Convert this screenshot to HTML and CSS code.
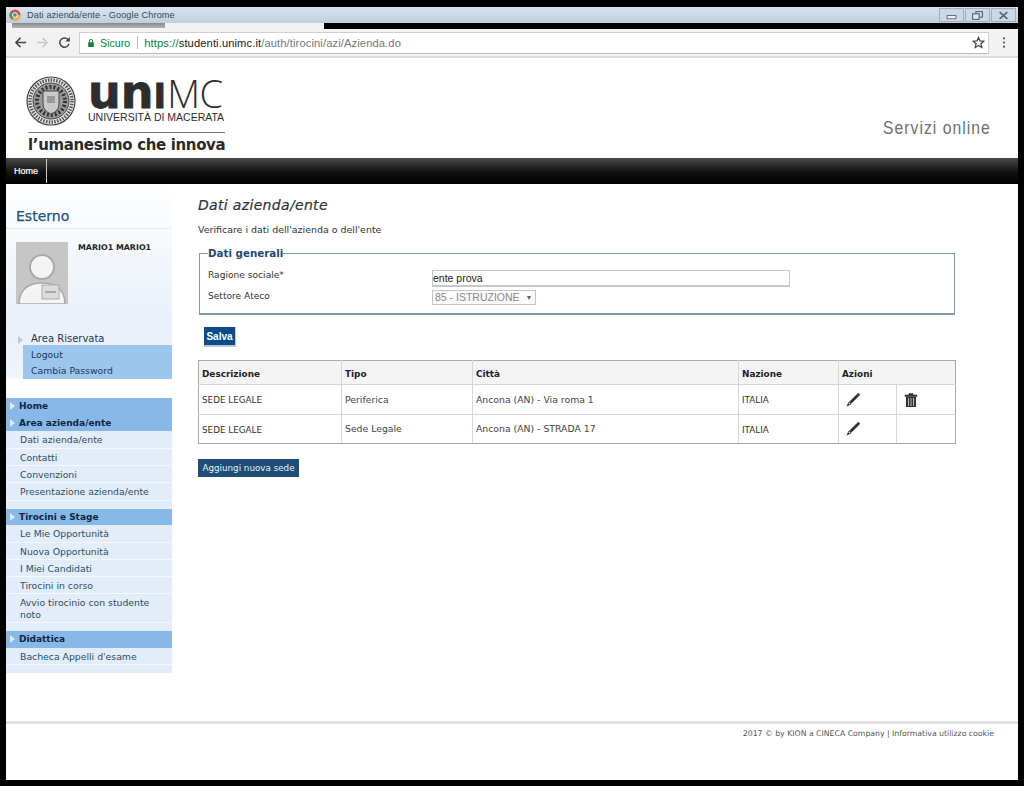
FILE: index.html
```html
<!DOCTYPE html>
<html lang="it">
<head>
<meta charset="utf-8">
<title>Dati azienda/ente</title>
<link rel="stylesheet" href="styles.css">
</head>
<body>
<div class="window">
  <div class="titlebar">
    <svg class="favicon" viewBox="0 0 12 12"><circle cx="6" cy="6" r="5.5" fill="#d9503f"/><path d="M6 6 L11.5 6 A5.5 5.5 0 0 1 3 10.6Z" fill="#e8b93a"/><path d="M6 6 L3 10.6 A5.5 5.5 0 0 1 1 3.6Z" fill="#4f9a55"/><circle cx="6" cy="6" r="2.4" fill="#4a86c8" stroke="#fff"/></svg>
    <span class="wintitle">Dati azienda/ente - Google Chrome</span>
    <div class="winbtns">
      <span class="winbtn"><svg viewBox="0 0 10 8"><rect x="1" y="4" width="8" height="3" fill="#eef2f6" stroke="#5a6470" stroke-width=".8"/></svg></span>
      <span class="winbtn"><svg viewBox="0 0 10 8"><rect x="3.5" y="0.5" width="6" height="5" fill="none" stroke="#5a6470"/><rect x="0.5" y="2.5" width="6" height="5" fill="#dfe6ee" stroke="#5a6470"/></svg></span>
      <span class="winbtn"><svg viewBox="0 0 10 8"><path d="M1.5 1 L8.5 7 M8.5 1 L1.5 7" stroke="#5a6470" stroke-width="1.5"/></svg></span>
    </div>
  </div>
  <div class="tabstrip"><div class="tab"><div class="tabbar"></div></div><div class="tabrest"></div></div>
  <div class="toolbar">
    <svg class="tool" viewBox="0 0 14 14"><path d="M13 7H2M7 2 2 7l5 5" fill="none" stroke="#444" stroke-width="1.6"/></svg>
    <svg class="tool" viewBox="0 0 14 14"><path d="M1 7h11M7 2l5 5-5 5" fill="none" stroke="#c8c8c8" stroke-width="1.6"/></svg>
    <svg class="tool" viewBox="0 0 14 14"><path d="M11.8 8.5A5 5 0 1 1 10.5 3.5L12 5" fill="none" stroke="#444" stroke-width="1.6"/><path d="M12.8 1.2V6H8Z" fill="#444"/></svg>
    <div class="omnibox">
      <svg class="lock" viewBox="0 0 10 12"><path d="M3 5V3.5a2 2 0 0 1 4 0V5" fill="none" stroke="#0b8043" stroke-width="1.2"/><rect x="1.5" y="5" width="7" height="6" fill="#0b8043"/></svg>
      <span class="secure">Sicuro</span>
      <span class="urlsep"></span>
      <span class="url"><span class="scheme">https://</span><span class="host">studenti.unimc.it</span>/auth/tirocini/azi/Azienda.do</span>
      <svg class="star" viewBox="0 0 14 14"><path d="M7 1.5 8.6 5.3l4.1.3-3.1 2.7 1 4L7 10.2l-3.600 2.100 1-4L1.300 5.600l4.100-.3Z" fill="none" stroke="#444" stroke-width="1.300"/></svg>
    </div>
    <svg class="dots" viewBox="0 0 4 14"><circle cx="2" cy="2.500" r="1.200" fill="#555"/><circle cx="2" cy="7" r="1.200" fill="#555"/><circle cx="2" cy="11.500" r="1.200" fill="#555"/></svg>
  </div>

  <header class="sitehead">
    <div class="logo">
      <div class="logotop">
        <svg class="seal" viewBox="0 0 50 50">
          <circle cx="25" cy="25" r="24" fill="#e8e8e8" stroke="#444" stroke-width="1.200"/>
          <circle cx="25" cy="25" r="21" fill="none" stroke="#555" stroke-width="3.500" stroke-dasharray="1.500 1.300"/>
          <circle cx="25" cy="25" r="18" fill="#999" stroke="#444"/>
          <circle cx="25" cy="25" r="14" fill="none" stroke="#333" stroke-width="4" stroke-dasharray="2 2"/>
          <path d="M17 15h16v13q0 7-8 10q-8-3-8-10Z" fill="#c9c9c9" stroke="#444"/>
          <path d="M21 20h8v7h-8Z" fill="#9a9a9a"/>
        </svg>
        <div class="wordmark">
          <div class="brand"><span class="uni">un<span class="unidot">I</span></span><span class="mc">MC</span></div>
          <div class="univ">UNIVERSITÀ DI MACERATA</div>
        </div>
      </div>
      <div class="motto">l’umanesimo che innova</div>
    </div>
    <div class="services">Servizi online</div>
  </header>

  <nav class="topnav"><a class="navhome">Home</a></nav>

  <div class="content">
    <aside class="sidebar">
      <div class="userbox">
        <h2 class="role">Esterno</h2>
        <div class="profile">
          <svg class="avatar" viewBox="0 0 52 62">
            <rect width="52" height="62" fill="#c6c6c6"/>
            <circle cx="26" cy="25" r="12" fill="#f4f4f4" stroke="#a9a9a9" stroke-width="2"/>
            <path d="M3 62C3 47 13 41 26 41s23 6 23 21Z" fill="#f4f4f4" stroke="#a9a9a9" stroke-width="1.500"/>
            <rect x="26" y="43" width="17" height="14" fill="#dcdcdc" stroke="#a9a9a9"/>
            <rect x="29" y="49" width="11" height="2" fill="#aaa"/>
          </svg>
          <div class="username">MARIO1 MARIO1</div>
        </div>
        <div class="reserved">
          <div class="reservedhead"><span class="tri pale"></span>Area Riservata</div>
          <div class="reservedlinks"><a>Logout</a><a>Cambia Password</a></div>
        </div>
      </div>
      <div class="menu">
        <div class="menuhead"><span class="tri"></span>Home</div>
        <div class="menuhead"><span class="tri"></span>Area azienda/ente</div>
        <a class="menuitem">Dati azienda/ente</a>
        <a class="menuitem">Contatti</a>
        <a class="menuitem">Convenzioni</a>
        <a class="menuitem">Presentazione azienda/ente</a>
        <div class="menugap"></div>
        <div class="menuhead"><span class="tri"></span>Tirocini e Stage</div>
        <a class="menuitem">Le Mie Opportunità</a>
        <a class="menuitem">Nuova Opportunità</a>
        <a class="menuitem">I Miei Candidati</a>
        <a class="menuitem">Tirocini in corso</a>
        <a class="menuitem">Avvio tirocinio con studente noto</a>
        <div class="menugap"></div>
        <div class="menuhead"><span class="tri"></span>Didattica</div>
        <a class="menuitem">Bacheca Appelli d'esame</a>
        <div class="menugap"></div>
      </div>
    </aside>

    <main class="main">
      <h1 class="pagetitle">Dati azienda/ente</h1>
      <p class="intro">Verificare i dati dell'azienda o dell'ente</p>
      <fieldset class="general">
        <legend>Dati generali</legend>
        <div class="formrow">
          <label class="flabel">Ragione sociale*</label>
          <input class="textin" type="text" value="ente prova">
        </div>
        <div class="formrow second">
          <label class="flabel">Settore Ateco</label>
          <span class="selectbox">85 - ISTRUZIONE <i class="caret">▼</i></span>
        </div>
      </fieldset>
      <button class="save" type="button">Salva</button>
      <table class="sedi">
        <colgroup><col class="c1"><col class="c2"><col class="c3"><col class="c4"><col class="c5"><col class="c6"></colgroup>
        <thead>
          <tr><th>Descrizione</th><th>Tipo</th><th>Città</th><th>Nazione</th><th colspan="2">Azioni</th></tr>
        </thead>
        <tbody>
          <tr>
            <td class="upper">SEDE LEGALE</td><td>Periferica</td><td>Ancona (AN) - Via roma 1</td><td class="upper">ITALIA</td>
            <td><svg class="ico" viewBox="0 0 16 16"><path d="M5 13 1.500 14.500 3 11Z" fill="#333"/><path d="M3 11 5 13 6 12 4 10Z" fill="#eee" stroke="#333" stroke-width=".7"/><path d="M4.200 9.800 11.800 2.200 13.800 4.200 6.200 11.800Z" fill="#333"/><path d="M12.500 1.500 14.500 3.500" stroke="#333" stroke-width="2"/></svg></td>
            <td><svg class="ico" viewBox="0 0 16 16"><path d="M2 3h12v1.500H2ZM6 3V1.500h4V3" fill="#333" stroke="#333" stroke-width=".6"/><path d="M3 5h10v9.500q0 .5-.5.5h-9q-.5 0-.5-.5Z" fill="#333"/><path d="M5.500 6v8M8 6v8M10.500 6v8" stroke="#bbb"/></svg></td>
          </tr>
          <tr>
            <td class="upper">SEDE LEGALE</td><td>Sede Legale</td><td>Ancona (AN) - STRADA 17</td><td class="upper">ITALIA</td>
            <td><svg class="ico" viewBox="0 0 16 16"><path d="M5 13 1.500 14.500 3 11Z" fill="#333"/><path d="M3 11 5 13 6 12 4 10Z" fill="#eee" stroke="#333" stroke-width=".7"/><path d="M4.200 9.800 11.800 2.200 13.800 4.200 6.200 11.800Z" fill="#333"/><path d="M12.500 1.500 14.500 3.500" stroke="#333" stroke-width="2"/></svg></td>
            <td></td>
          </tr>
        </tbody>
      </table>
      <button class="addsede" type="button">Aggiungi nuova sede</button>
    </main>
  </div>

  <footer class="foot">2017 © by KION a CINECA Company | Informativa utilizzo cookie</footer>
</div>
</body>
</html>
```
FILE: styles.css
```css
* { box-sizing: border-box; }
html, body { margin: 0; height: 786px; overflow: hidden; }
body { background: #000; padding: 7px 6px 6px; font-family: "DejaVu Sans", Verdana, sans-serif; font-size: 9.5px; color: #333; }
.window { height: 773px; background: #fff; display: flex; flex-direction: column; }

.titlebar { height: 16px; flex: none; background: linear-gradient(#d9e4ef, #c0cfdd); display: flex; align-items: center; padding-left: 3px; }
.favicon { width: 12px; height: 12px; }
.wintitle { margin-left: 6px; font: 9.200px "Liberation Sans", Arial, sans-serif; color: #3a4a58; letter-spacing: .1px; }
.winbtns { margin-left: auto; margin-right: 2px; display: flex; gap: 1px; }
.winbtn { width: 25px; height: 14px; border: 1px solid #9fb0c0; background: #ccd8e4; display: flex; align-items: center; justify-content: center; }
.winbtn svg { width: 11px; height: 9px; }

.tabstrip { height: 6px; flex: none; display: flex; background: #000; }
.tab { width: 318px; background: #f2f2f2; }
.tabbar { width: 153px; height: 5px; background: linear-gradient(#888, #b5b5b5); margin-left: 6px; }
.tabrest { flex: 1; background: #000; }

.toolbar { height: 29px; flex: none; background: #f2f2f2; border-bottom: 2px solid #ddd; display: flex; align-items: center; padding: 0 12px 0 8px; }
.tool { width: 13px; height: 13px; margin-right: 9px; flex: none; }
.tool + .tool + .tool { margin-right: 8px; }
.omnibox { flex: 1; height: 22px; background: #fff; border: 1px solid #cfcfcf; border-bottom-color: #bbb; display: flex; align-items: center; padding: 0 3px 0 7px; font: 10.700px "Liberation Sans", Arial, sans-serif; }
.lock { width: 8px; height: 10px; }
.secure { color: #0b8043; margin-left: 5px; }
.urlsep { width: 1px; height: 13px; background: #bbb; margin: 0 6px 0 7px; }
.url { color: #777; font-size: 11.200px; letter-spacing: .1px; }
.scheme { color: #0b8043; }
.host { color: #222; }
.star { width: 13px; height: 13px; margin-left: auto; }
.dots { width: 4px; height: 13px; margin-left: 13px; flex: none; }

.sitehead { height: 100px; flex: none; display: flex; justify-content: space-between; padding: 18px 27px 0 20px; background: #fff; }
.logo { width: 200px; }
.logotop { display: flex; gap: 12px; }
.seal { width: 50px; height: 50px; flex: none; }
.wordmark { color: #2d2d2d; }
.brand { height: 34px; line-height: 32px; white-space: nowrap; display: flex; align-items: baseline; }
.uni { font: 700 46px/32px "DejaVu Sans", sans-serif; -webkit-text-stroke: .8px #2d2d2d; }
.unidot { font-size: 34px; }
.mc { font: 300 38px/32px "Open Sans", "Liberation Sans", sans-serif; margin-left: 1px; letter-spacing: -.5px; }
.univ { font: 10.500px "Liberation Sans", Arial, sans-serif; white-space: nowrap; margin-top: 1px; }
.motto { border-top: 1px solid #777; margin-top: 6px; padding-top: 3px; margin-left: 2px; width: 197px; font: 700 15px "DejaVu Sans", sans-serif; letter-spacing: -.35px; color: #2a2a2a; white-space: nowrap; }
.services { align-self: flex-end; margin-bottom: 19px; font: 18px "Liberation Sans", sans-serif; letter-spacing: 1.200px; color: #707070; transform: scaleX(.87); transform-origin: right center; }

.topnav { height: 26px; flex: none; background: linear-gradient(#4a4a4a, #111 55%, #000); display: flex; align-items: center; }
.navhome { height: 24px; padding: 0 8px; color: #fff; font: 9px/24px "Liberation Sans", Arial, sans-serif; border-right: 1px solid #ccc; width: 41px; -webkit-text-stroke: .2px #fff; }

.content { flex: 1; display: flex; }
.sidebar { width: 166px; flex: none; }
.userbox { height: 196px; padding-top: 23px; background: linear-gradient(#fff, #e9f0fa 70%, #eef4fb 98%, #fff); }
.role { margin: 0; font: 14px/18px "DejaVu Sans", sans-serif; color: #1d5383; height: 22px; border-bottom: 1px dotted #d8dde4; padding-left: 10px; -webkit-text-stroke: .25px #1d5383; }
.profile { display: flex; margin: 13px 0 0 10px; gap: 10px; height: 88px; }
.avatar { width: 52px; height: 62px; }
.username { font-size: 7.900px; font-weight: 700; color: #222; margin-top: 1px; white-space: nowrap; }
.reserved { margin-top: 2px; }
.reservedhead { height: 13px; line-height: 13px; padding-left: 25px; position: relative; color: #1a3a55; font-size: 10px; }
.reservedhead .tri { position: absolute; left: 12px; top: 4px; }
.reservedlinks { margin-left: 17px; background: #9dc6ef; padding: 2px 8px; height: 34px; }
.reservedlinks a { display: block; height: 15.500px; line-height: 15.500px; color: #1a3a55; font-size: 9.300px; }

.menu { margin-top: 18px; background: #e2edf9; }
.menuhead { height: 16.700px; line-height: 16.700px; background: #88b8e8; font-weight: 700; font-size: 9px; color: #10263c; padding-left: 13px; position: relative; }
.tri { position: absolute; left: 4px; top: 4px; width: 0; height: 0; border-style: solid; border-width: 4.500px 0 4.500px 5px; border-color: transparent transparent transparent #d8ebfb; }
.tri.pale { border-left-color: #b8cbe0; }
.menuitem { display: block; min-height: 17.300px; padding: 3px 8px 1.600px 14px; line-height: 11.700px; font-size: 9.300px; color: #2d4d68; border-bottom: 1px solid #f5f8fc; }
.menugap { height: 8px; }

.main { flex: 1; padding: 12px 64px 0 26px; }
.pagetitle { margin: 0; font: italic 400 14px/18px "DejaVu Sans", sans-serif; letter-spacing: .33px; color: #333; -webkit-text-stroke: .2px #333; }
.intro { margin: 9px 0 0; font-size: 9.450px; line-height: 14px; }
.general { margin: 10px 0 0 1px; padding: 0 8px; width: 756px; height: 68px; border: 1px solid #7c9bb0; border-bottom-width: 2px; }
.general legend { margin-left: 0; padding: 0; font-size: 10.300px; font-weight: 700; color: #1d4a78; line-height: 12px; }
.formrow { display: flex; height: 18px; margin-top: 11px; }
.formrow.second { margin-top: 2px; height: 16px; }
.flabel { width: 224px; font-size: 9.100px; line-height: 14px; margin-top: -2px; flex: none; }
.formrow.second .flabel { margin-top: -1px; }
.textin { width: 358px; height: 17px; border: 1px solid #c8c8c8; border-width: 1px 1px 2px 1px; padding: 0; font: 10.500px "Liberation Sans", Arial, sans-serif; color: #222; }
.selectbox { width: 104px; height: 15px; border: 1px solid #c4c4c4; background: #fafafa; color: #888; font: 10.500px/13px "Liberation Sans", Arial, sans-serif; padding-left: 2px; white-space: nowrap; }
.caret { font-style: normal; font-size: 7px; vertical-align: 1px; color: #666; margin-left: 3px; }
.save { display: block; margin: 12px 0 0 6px; width: 32px; height: 20px; border: 0; border-bottom: 2px solid #bcc8d6; border-right: 1px solid #bcc8d6; padding: 0; background: #0e4a8a; color: #fff; font: 700 10px "Liberation Sans", Arial, sans-serif; }
.sedi { margin-top: 13px; width: 757px; border-collapse: collapse; table-layout: fixed; }
.c1 { width: 143px; } .c2 { width: 131px; } .c3 { width: 266px; } .c4 { width: 100px; } .c5 { width: 58px; } .c6 { width: 59px; }
.sedi th, .sedi td { border: 1px solid #d6d6d6; padding: 0 3px; font-size: 9.300px; text-align: left; }
.sedi th:first-child, .sedi td:first-child { border-left-color: #a9a9a9; }
.sedi th:last-child, .sedi td:last-child { border-right-color: #a9a9a9; }
.sedi th { height: 24px; padding-top: 3px; background: #f4f4f4; font-size: 8.900px; color: #222; font-weight: 700; border-top-color: #a9a9a9; }
.sedi td { height: 29.500px; color: #444; }
.sedi tbody tr:last-child td { border-bottom-color: #a9a9a9; }
.sedi td.upper { font-size: 8.800px; color: #333; padding-top: 2px; }
.ico { display: block; width: 16px; height: 16px; margin: 1px 0 0 3px; }
.addsede { display: block; margin-top: 15px; width: 101px; height: 18px; border: 0; padding: 0; background: #1d4e79; color: #e8f0f8; font: 8.750px "DejaVu Sans", sans-serif; white-space: nowrap; }
.foot { height: 59px; flex: none; border-top: 3px solid #e0e0e0; padding: 5px 24px 0 0; text-align: right; font-size: 7.750px; color: #555; }
```
